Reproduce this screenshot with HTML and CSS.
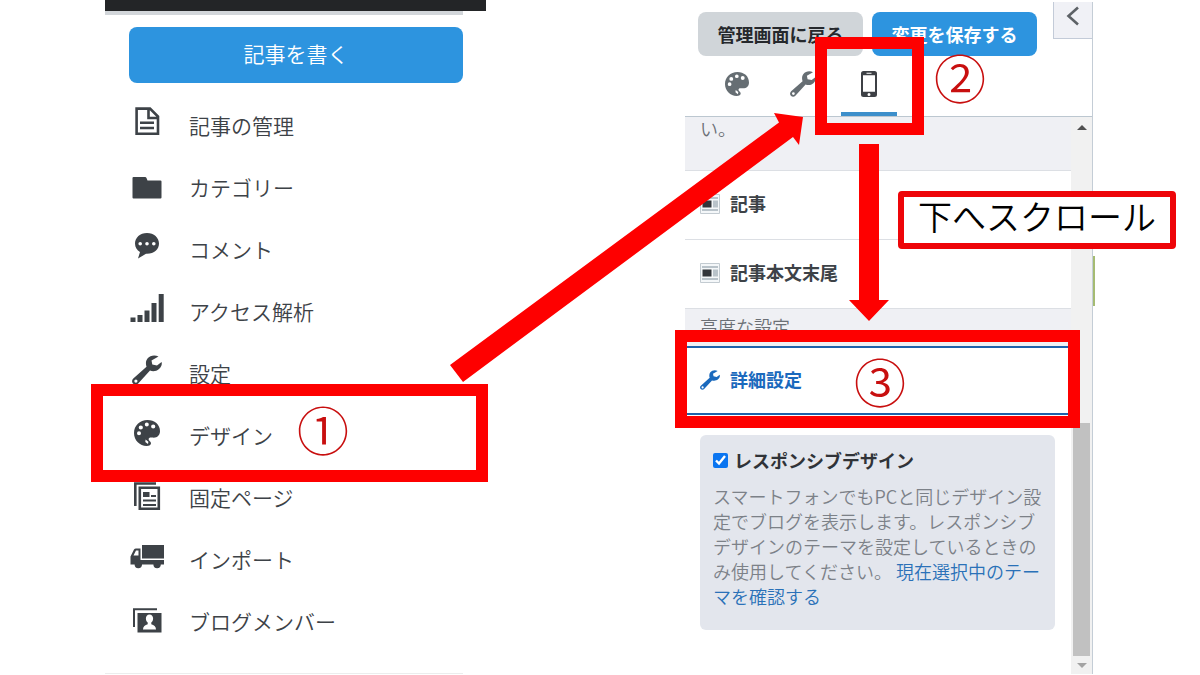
FILE: index.html
```
<!DOCTYPE html>
<html lang="ja">
<head>
    <meta charset="UTF-8">
    <meta name="viewport" content="width=device-width, initial-scale=1.0">
    <title>レスポンシブデザインの設定手順</title>
    <link rel="stylesheet" href="styles.css">
</head>
<body>
    <!-- Iconos compartidos -->
    <svg class="sprite" aria-hidden="true">
        <symbol id="icon-palette" viewBox="0 0 26 26">
            <path fill-rule="evenodd" d="M13.500 0C5.800 0 0 5.600 0 13C0 20.500 6 26 12.500 26C15.500 26 17 24.800 17 23.300C17 21.300 14.600 21 14.600 19.300C14.600 17.600 16.300 17.300 18.300 17.600C22.800 18.300 26 15.500 26 11.300C26 4.500 20.500 0 13.500 0ZM5 11.200a2 2 0 1 1 0 4a2 2 0 1 1 0-4ZM6.800 5.400a2.100 2.100 0 1 1 0 4.200a2.100 2.100 0 1 1 0-4.200ZM12.800 2.600a2 2 0 1 1 0 4a2 2 0 1 1 0-4ZM19.200 4.400a2.100 2.100 0 1 1 0 4.200a2.100 2.100 0 1 1 0-4.200ZM11.600 19.600L14.400 21.800L14 24L11.300 22Z"/>
        </symbol>
        <symbol id="icon-wrench" viewBox="0 0 30 30">
            <path fill-rule="evenodd" d="M26.500 1.500C23-.5 18 .2 15.500 3.500C13.600 6 13.600 9 14.500 11.700L1.300 23.500C-.3 25 -.3 27.200 1 28.600C2.500 30.200 4.800 30.100 6.200 28.600L18 15.600C21 16.700 24.500 16.300 27 14C29.400 11.900 30.200 9.200 29.600 7L25 10.500L20.300 9.500L19.500 5.500L26.500 1.500ZM3.900 24.500a1.600 1.600 0 1 1 0 3.200a1.600 1.600 0 1 1 0-3.200Z"/>
        </symbol>
        <symbol id="icon-module" viewBox="0 0 20 20">
            <path fill="#f4f7f9" stroke="#c3cbd1" d="M.5.5h19v19h-19z"/>
            <path fill="#b9c3ca" d="M2 3h16v2H2zM13 6.500h5v7h-5zM2 15h16v2H2z"/>
            <path fill="#33363b" d="M2.500 6.500h9v7h-9z"/>
        </symbol>
    </svg>

    <main class="guide">
        <section class="admin">
            <div class="topbar"></div>
            <div class="subbar"></div>
            <button class="btn-write" type="button">記事を書く</button>
            <nav>
                <ul class="menu">
                    <li><a href="#">
                        <svg viewBox="0 0 36 36"><path fill="none" stroke="currentColor" stroke-width="2.600" d="M7.600 2.600h13.400l8 8v17.200H7.600zM19.500 2.600v9.400H29M11 16.800h14M11 22h14"/></svg>
                        記事の管理</a></li>
                    <li><a href="#">
                        <svg viewBox="0 0 36 36"><path d="M4.500 9h11.500q1.200 0 1.600 1.200L18.500 12.500H31.500q1 0 1 1V29.500q0 1-1 1H4.500q-1 0-1-1V10q0-1 1-1z"/></svg>
                        カテゴリー</a></li>
                    <li><a href="#">
                        <svg viewBox="0 0 36 36"><path fill-rule="evenodd" d="M18 3C11 3 6 7.700 6 13.500c0 4 2 6.800 5 8.500L9 28.500l8-4.700C25 24.200 30 19.500 30 13.500C30 7.700 25 3 18 3zM11.200 12a1.800 1.800 0 1 1 0 3.600a1.800 1.800 0 1 1 0-3.600zM18 12a1.800 1.800 0 1 1 0 3.600a1.800 1.800 0 1 1 0-3.600zM24.800 12a1.800 1.800 0 1 1 0 3.600a1.800 1.800 0 1 1 0-3.600z"/></svg>
                        コメント</a></li>
                    <li><a href="#">
                        <svg viewBox="0 0 36 36"><path d="M1.500 25.500h5V30h-5zM8.500 23h5v7h-5zM15.500 18.500h5V30h-5zM22.500 11h5v19h-5zM29.700 2h5v28h-5z"/></svg>
                        アクセス解析</a></li>
                    <li><a href="#">
                        <svg viewBox="0 0 36 36"><use href="#icon-wrench" x="3" y="1" width="30" height="30"/></svg>
                        設定</a></li>
                    <li class="picked"><a href="#">
                        <svg viewBox="0 0 36 36"><use href="#icon-palette" x="5" y="4" width="26" height="26"/></svg>
                        デザイン</a>
                        <span class="frame frame-design"></span>
                        <span class="step step-one">①</span></li>
                    <li><a href="#">
                        <svg viewBox="0 0 36 36"><path fill="none" stroke="currentColor" stroke-width="2.600" d="M6.300 28V5.500H27M10.800 9.800h19v21h-19z"/><path d="M14 14h6.500v5H14zM22 17h5v2h-5zM14 21.500h13v2H14zM14 26h13v2H14z"/></svg>
                        固定ページ</a></li>
                    <li><a href="#">
                        <svg viewBox="0 0 36 36"><path fill-rule="evenodd" d="M13 5h22v13.500H13zM1.500 24.500v-8L5 9.500Q5.600 8.500 7 8.500h4.500v11.500H35v4.500h-3.200a3.700 3.700 0 0 1-7.400 0H13a3.700 3.700 0 0 1-7.400 0zM4.500 15.500H9.500v-5H7z"/></svg>
                        インポート</a></li>
                    <li><a href="#">
                        <svg viewBox="0 0 36 36"><path fill="none" stroke="currentColor" stroke-width="2" d="M5 25V7.300h23"/><path fill-rule="evenodd" d="M8.500 11h24v19.500h-24zM20.500 12.500c-2.300 0-3.600 1.700-3.600 4c0 1.900.7 3.200 1.800 4.100v1.700c-2.600.8-4.700 2.300-4.700 5.200h13c0-2.900-2.100-4.400-4.700-5.200v-1.700c1.100-.9 1.800-2.200 1.800-4.100c0-2.300-1.300-4-3.600-4z"/></svg>
                        ブログメンバー</a></li>
                </ul>
            </nav>
        </section>

        <section class="editor">
            <div class="editor-head">
                <button class="btn-back" type="button">管理画面に戻る</button>
                <button class="btn-save" type="button">変更を保存する</button>
                <button class="btn-fold" type="button" aria-label="閉じる">
                    <svg viewBox="0 0 14 20"><path fill="none" stroke="currentColor" stroke-width="2.600" d="M12 1.500L2.500 10l9.500 8.500"/></svg>
                </button>
            </div>

            <div class="tabs">
                <button class="tab" type="button" aria-label="カスタマイズ前"><svg width="24" height="26"><use href="#icon-palette"/></svg></button>
                <button class="tab" type="button" aria-label="カスタマイズ"><svg width="26" height="28"><use href="#icon-wrench"/></svg></button>
                <div class="tab-picked">
                    <button class="tab active" type="button" aria-label="スマートフォン">
                        <svg width="16" height="26" viewBox="0 0 16 26"><path fill-rule="evenodd" d="M2.500 0h11Q16 0 16 2.500v21Q16 26 13.500 26h-11Q0 26 0 23.500v-21Q0 0 2.500 0zM2 4.200v16.600h12V4.200zM5.500 1.800v1h5v-1zM8 21.900a1.500 1.500 0 1 0 0 3a1.500 1.500 0 1 0 0-3z"/></svg>
                    </button>
                    <span class="frame frame-tab"></span>
                    <span class="step step-two">②</span>
                    <svg class="arrow-down" viewBox="0 0 40 177"><path d="M10 0h20v156h10L20 177L0 156h10z"/></svg>
                </div>
            </div>

            <div class="editor-body">
                <div class="settings">
                    <p class="group note">い。</p>
                    <a class="row" href="#"><svg><use href="#icon-module"/></svg>記事</a>
                    <a class="row" href="#"><svg><use href="#icon-module"/></svg>記事本文末尾</a>
                    <p class="group title">高度な設定</p>
                    <div class="picked">
                        <a class="row open" href="#"><svg><use href="#icon-wrench"/></svg>詳細設定</a>
                        <span class="frame frame-detail"></span>
                        <span class="step step-three">③</span>
                    </div>
                    <div class="card">
                        <label><input type="checkbox" checked>レスポンシブデザイン</label>
                        <p>スマートフォンでもPCと同じデザイン設定でブログを表示します。レスポンシブデザインのテーマを設定しているときのみ使用してください。 <a href="#">現在選択中のテーマを確認する</a></p>
                    </div>
                </div>
                <div class="scrollbar">
                    <span class="scroll-up"></span>
                    <span class="thumb"></span>
                    <span class="scroll-down"></span>
                </div>
            </div>
            <span class="preview-edge"></span>
            <p class="callout">下へスクロール</p>
        </section>

        <svg class="arrow-tab" viewBox="0 0 360 275"><path d="M0 255L329 12.500L324 3L353 7L349 35L343 27L13 272z"/></svg>
    </main>
</body>
</html>
```

FILE: styles.css
```
* {
    box-sizing: border-box;
}

body {
    margin: 0;
    background: #fff;
    color: #3d4247;
    font-family: "Noto Sans CJK JP", sans-serif;
    overflow-x: hidden;
}

p, ul {
    margin: 0;
    padding: 0;
}

a {
    color: inherit;
    text-decoration: none;
}

button {
    border: none;
    padding: 0;
    font-family: inherit;
    cursor: pointer;
}

svg {
    display: block;
    fill: currentColor;
}

.sprite {
    position: absolute;
    width: 0;
    height: 0;
}

.guide {
    position: relative;
    display: grid;
    grid-template-columns: 105fr 381fr 199fr 409fr 106fr;
    align-items: start;
}

/* Menu */
.admin {
    grid-column: 2;
}

.topbar {
    height: 11px;
    background: #232527;
}

.subbar {
    height: 4px;
    margin-right: 23px;
    background: #d2d6da;
}

.btn-write {
    display: block;
    width: calc(100% - 47px);
    height: 56px;
    margin: 12px 23px 12px 24px;
    padding-bottom: 4px;
    border-radius: 8px;
    background: #2d94df;
    color: #fff;
    font-size: 21px;
    font-weight: 350;
}

.menu {
    list-style: none;
}

.menu li {
    position: relative;
}

.menu a {
    display: flex;
    align-items: center;
    height: 62px;
    padding-bottom: 2px;
    font-size: 21px;
    font-weight: 350;
}

.menu svg {
    width: 36px;
    height: 36px;
    margin: 0 24px 2px;
}

nav {
    margin-right: 23px;
    padding-bottom: 20px;
    border-bottom: 1px solid #eceded;
}

/* Editor */
.editor {
    grid-column: 4;
    position: relative;
    margin: 2px 1px 0 0;
    border-right: 1px solid #c4cdd6;
}

.editor-head {
    display: flex;
    align-items: flex-start;
    padding-left: 13px;
}

.btn-back, .btn-save {
    flex: 1;
    height: 44px;
    margin-top: 10px;
    border-radius: 8px;
    font-size: 18px;
    font-weight: bold;
}

.btn-back {
    margin-right: 9px;
    background: #d0d5d9;
    color: #25282c;
}

.btn-save {
    margin-right: 16px;
    background: #2d94df;
    color: #fff;
}

.btn-fold {
    display: flex;
    justify-content: center;
    width: 39px;
    height: 37px;
    padding-top: 4px;
    border: solid #c3cbd8;
    border-width: 0 0 1px 1px;
    background: #f0f1f6;
    color: #5d6267;
}

.btn-fold svg {
    width: 14px;
    height: 20px;
}

.tabs {
    display: flex;
    gap: 10px;
    padding-left: 24px;
    border-bottom: 1px solid #bcc7d0;
}

.tab {
    display: flex;
    align-items: center;
    justify-content: center;
    width: 56px;
    height: 60px;
    border-bottom: 4px solid transparent;
    background: none;
    color: #666e73;
}

.tab.active {
    border-bottom-color: #3d8fcb;
    color: #3d4045;
}

.tab-picked, .picked {
    position: relative;
}

.editor-body {
    display: flex;
}

.settings {
    flex: 1;
}

.group {
    padding-left: 15px;
    border-bottom: 1px solid #dcdfe4;
    background: #eff0f4;
    color: #6b6f75;
    font-size: 18px;
    font-weight: 350;
    line-height: 22px;
}

.group.note {
    height: 54px;
}

.group.title {
    height: 37px;
    padding-top: 6px;
    border-bottom: none;
}

.row {
    display: flex;
    align-items: center;
    gap: 10px;
    height: 69px;
    padding: 0 0 4px 15px;
    border-bottom: 1px solid #dcdfe4;
    font-size: 18px;
    font-weight: bold;
}

.row svg {
    width: 20px;
    height: 20px;
    margin-top: 2px;
}

.row.open {
    border: solid #1d62ab;
    border-width: 2px 0;
    color: #1a69bd;
}

.card {
    margin: 20px 16px 44px 15px;
    padding: 12px 13px 21px;
    border-radius: 6px;
    background: #e3e6ed;
}

.card label {
    display: flex;
    align-items: center;
    gap: 6px;
    height: 26px;
    margin-bottom: 11px;
    color: #303338;
    font-size: 18px;
    font-weight: bold;
}

.card input {
    width: 15px;
    height: 15px;
    margin: 0;
    accent-color: #0b75f0;
}

.card p {
    color: #7c8188;
    font-size: 18px;
    font-weight: 350;
    line-height: 25px;
}

.card a {
    color: #2a71b8;
}

.scrollbar {
    display: flex;
    flex-direction: column;
    align-items: center;
    width: 21px;
    padding: 8px 0 6px;
    background: #f1f1f1;
}

.thumb {
    width: 17px;
    height: 233px;
    margin-top: auto;
    background: #c1c1c1;
}

.scroll-up, .scroll-down {
    border: 5px solid transparent;
    border-top-width: 0;
    border-bottom: 5px solid #505050;
}

.scroll-down {
    margin-top: 7px;
    border-width: 5px 5px 0;
    border-top-color: #a3a3a3;
}

.preview-edge {
    position: absolute;
    top: 254px;
    right: -3px;
    width: 2px;
    height: 50px;
    background: #a5bb72;
}

/* Marks over the screens */
.frame {
    position: absolute;
    z-index: 2;
    border: 12px solid #fe0000;
    pointer-events: none;
}

.frame-design {
    top: -21px;
    right: -25px;
    left: -14px;
    height: 98px;
}

.frame-tab {
    top: -19px;
    left: -26px;
    width: 109px;
    height: 98px;
}

.frame-detail {
    top: -16px;
    right: -9px;
    left: -10px;
    height: 98px;
}

.step {
    position: absolute;
    z-index: 3;
    color: #c80f0f;
    font-size: 52px;
    font-weight: 350;
    line-height: 52px;
}

.step-one {
    top: -2px;
    left: 192px;
}

.step-two {
    top: -5px;
    left: 93px;
}

.step-three {
    top: 9px;
    left: 169px;
}

.arrow-down, .arrow-tab {
    position: absolute;
    z-index: 1;
    fill: #fe0000;
}

.arrow-down {
    top: 88px;
    left: 8px;
    width: 40px;
    height: 177px;
}

.arrow-tab {
    top: 110px;
    left: 37.5%;
    width: 30%;
}

.callout {
    position: absolute;
    z-index: 3;
    top: 189px;
    right: -84px;
    width: 278px;
    height: 58px;
    border: 6px solid #ee0509;
    border-radius: 4px;
    background: #fff;
    color: #000;
    font-size: 34px;
    font-weight: 350;
    line-height: 38px;
    text-align: center;
}
```
